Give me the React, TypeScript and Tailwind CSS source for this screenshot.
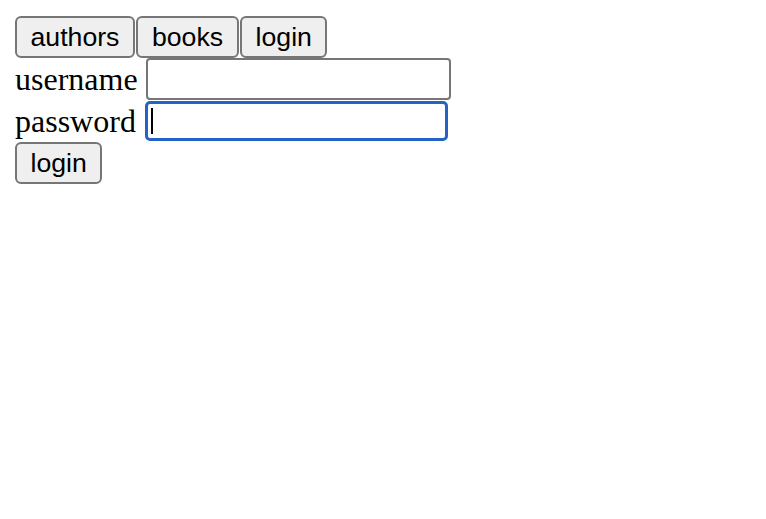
import React from "react";

const navBtn =
  "h-[42px] rounded-[6px] border-2 border-[#767676] bg-[#efefef] px-[13.5px] text-[26.67px] leading-none text-black font-['Liberation_Sans',Arial,sans-serif]";

const App = () => {
  return (
    <div className="min-h-screen bg-white px-[15px] py-4 font-['Liberation_Serif','Times_New_Roman',serif] text-black">
      <div className="flex gap-[1.5px]">
        <button className={navBtn}>authors</button>
        <button className={navBtn}>books</button>
        <button className={navBtn}>login</button>
      </div>

      <div className="flex h-[42px] items-center">
        <label className="text-[32px] leading-none">username</label>
        <input
          type="text"
          className="ml-[8px] h-[42px] w-[305px] rounded-[4px] border-2 border-[#767676] bg-white outline-none"
        />
      </div>

      <div className="flex h-[42px] items-center">
        <label className="text-[32px] leading-none">password</label>
        <div className="relative ml-[9px]">
          <input
            type="password"
            className="h-[40px] w-[303px] rounded-[5px] border-[3px] border-[#2463c5] bg-white outline-none"
          />
          <span className="absolute left-[6px] top-[7px] h-[26px] w-[2px] bg-black" />
        </div>
      </div>

      <div className="flex">
        <button className={navBtn}>login</button>
      </div>
    </div>
  );
};

export default App;
